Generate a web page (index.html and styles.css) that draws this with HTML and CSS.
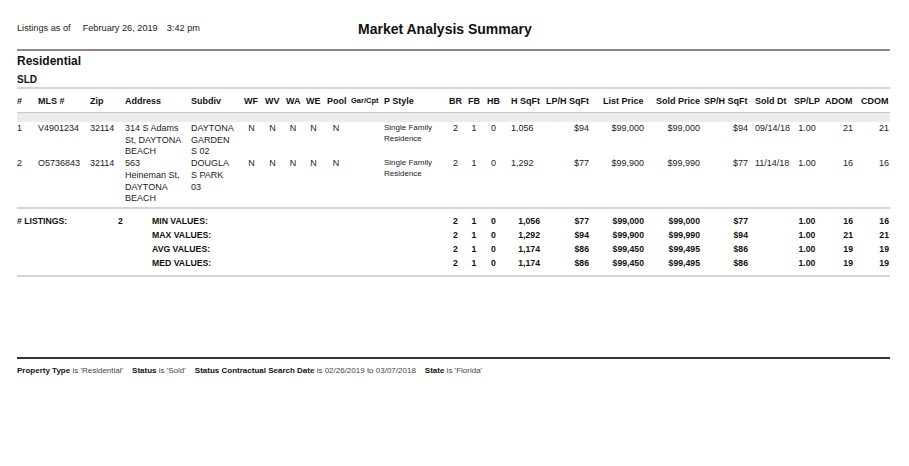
FILE: index.html
```html
<!DOCTYPE html>
<html lang="en">
<head>
<meta charset="utf-8">
<title>Market Analysis Summary</title>
<link rel="stylesheet" href="styles.css">
</head>
<body>
<div class="page">
  <header class="top">
    <div class="asof"><span>Listings as of</span><span class="date">February 26, 2019</span><span class="time">3:42 pm</span></div>
    <h1 class="title">Market Analysis Summary</h1>
  </header>
  <div class="rule"></div>
  <h2 class="section">Residential</h2>
  <h3 class="status">SLD</h3>
  <table class="grid">
    <colgroup>
      <col class="w21"><col class="w52"><col class="w35"><col class="w66"><col class="w53">
      <col class="w21"><col class="w21"><col class="w20"><col class="w21"><col class="w24">
      <col class="w33"><col class="w65"><col class="w19"><col class="w19"><col class="w24">
      <col class="w35"><col class="w57"><col class="w53"><col class="w48"><col class="w51">
      <col class="w39"><col class="w31"><col class="w36"><col class="w29">
    </colgroup>
    <thead>
      <tr class="head">
        <th>#</th><th>MLS #</th><th>Zip</th><th>Address</th><th>Subdiv</th>
        <th>WF</th><th>WV</th><th>WA</th><th>WE</th><th>Pool</th>
        <th class="small">Gar/Cpt</th><th>P Style</th><th>BR</th><th>FB</th><th>HB</th>
        <th>H SqFt</th><th>LP/H SqFt</th><th>List Price</th><th>Sold Price</th><th>SP/H SqFt</th>
        <th>Sold Dt</th><th>SP/LP</th><th>ADOM</th><th>CDOM</th>
      </tr>
    </thead>
    <tbody class="data">
      <tr><td class="band" colspan="24"></td></tr>
      <tr class="first">
        <td>1</td><td>V4901234</td><td>32114</td><td>314 S Adams<br>St, DAYTONA<br>BEACH</td><td>DAYTONA<br>GARDEN<br>S 02</td>
        <td class="yn">N</td><td class="yn">N</td><td class="yn">N</td><td class="yn">N</td><td class="yn">N</td>
        <td></td><td class="style">Single Family<br>Residence</td>
        <td class="c-br">2</td><td class="c-fb">1</td><td class="c-hb">0</td>
        <td>1,056</td><td class="c-lph">$94</td><td class="c-list">$99,000</td><td class="c-sold">$99,000</td><td class="c-sph">$94</td>
        <td class="c-dt">09/14/18</td><td class="c-splp">1.00</td><td class="c-adom">21</td><td class="c-cdom">21</td>
      </tr>
      <tr class="last">
        <td>2</td><td>O5736843</td><td>32114</td><td>563<br>Heineman St,<br>DAYTONA<br>BEACH</td><td>DOUGLA<br>S PARK<br>03</td>
        <td class="yn">N</td><td class="yn">N</td><td class="yn">N</td><td class="yn">N</td><td class="yn">N</td>
        <td></td><td class="style">Single Family<br>Residence</td>
        <td class="c-br">2</td><td class="c-fb">1</td><td class="c-hb">0</td>
        <td>1,292</td><td class="c-lph">$77</td><td class="c-list">$99,900</td><td class="c-sold">$99,990</td><td class="c-sph">$77</td>
        <td class="c-dt">11/14/18</td><td class="c-splp">1.00</td><td class="c-adom">16</td><td class="c-cdom">16</td>
      </tr>
    </tbody>
    <tbody class="summary">
      <tr class="first">
        <td colspan="12"><div class="labgrid"><span># LISTINGS:</span><span>2</span><span>MIN VALUES:</span></div></td>
        <td class="c-br">2</td><td class="c-fb">1</td><td class="c-hb">0</td>
        <td class="c-hsq">1,056</td><td class="c-lph">$77</td><td class="c-list">$99,000</td><td class="c-sold">$99,000</td><td class="c-sph">$77</td>
        <td></td><td class="c-splp">1.00</td><td class="c-adom">16</td><td class="c-cdom">16</td>
      </tr>
      <tr>
        <td colspan="12"><div class="labgrid"><span></span><span></span><span>MAX VALUES:</span></div></td>
        <td class="c-br">2</td><td class="c-fb">1</td><td class="c-hb">0</td>
        <td class="c-hsq">1,292</td><td class="c-lph">$94</td><td class="c-list">$99,900</td><td class="c-sold">$99,990</td><td class="c-sph">$94</td>
        <td></td><td class="c-splp">1.00</td><td class="c-adom">21</td><td class="c-cdom">21</td>
      </tr>
      <tr>
        <td colspan="12"><div class="labgrid"><span></span><span></span><span>AVG VALUES:</span></div></td>
        <td class="c-br">2</td><td class="c-fb">1</td><td class="c-hb">0</td>
        <td class="c-hsq">1,174</td><td class="c-lph">$86</td><td class="c-list">$99,450</td><td class="c-sold">$99,495</td><td class="c-sph">$86</td>
        <td></td><td class="c-splp">1.00</td><td class="c-adom">19</td><td class="c-cdom">19</td>
      </tr>
      <tr class="last">
        <td colspan="12"><div class="labgrid"><span></span><span></span><span>MED VALUES:</span></div></td>
        <td class="c-br">2</td><td class="c-fb">1</td><td class="c-hb">0</td>
        <td class="c-hsq">1,174</td><td class="c-lph">$86</td><td class="c-list">$99,450</td><td class="c-sold">$99,495</td><td class="c-sph">$86</td>
        <td></td><td class="c-splp">1.00</td><td class="c-adom">19</td><td class="c-cdom">19</td>
      </tr>
    </tbody>
  </table>
  <div class="foot-rule"></div>
  <p class="criteria"><span class="crit"><b>Property Type</b> is 'Residential'</span><span class="crit"><b>Status</b> is 'Sold'</span><span class="crit"><b>Status Contractual Search Date</b> is 02/26/2019 to 03/07/2018</span><span class="crit"><b>State</b> is 'Florida'</span></p>
</div>
</body>
</html>
```

FILE: styles.css
```css
html, body {
  margin: 0;
  background: #ffffff;
}
body {
  color: #222222;
  font-family: "Liberation Sans", Arial, Helvetica, sans-serif;
}
.page {
  width: 873px;
  padding-left: 17px;
}
.top {
  display: grid;
  grid-template-columns: 341px auto;
  align-items: start;
  padding-top: 20px;
}
.asof {
  display: flex;
  font-size: 9.2px;
  line-height: 16px;
  color: #222;
}
.asof .date { margin-left: 12px; }
.asof .time { margin-left: 9px; }
.title {
  margin: 0;
  font-size: 14px;
  font-weight: bold;
  line-height: 18px;
  color: #111;
}
.rule {
  margin-top: 11px;
  border-top: 2px solid #8a8a8a;
}
.section {
  margin: 3px 0 0;
  font-size: 12px;
  line-height: 14px;
  font-weight: bold;
  color: #111;
}
.status {
  margin: 6px 0 0;
  font-size: 10px;
  line-height: 12px;
  font-weight: bold;
  color: #111;
}
.grid {
  margin-top: 1px;
  width: 873px;
  table-layout: fixed;
  border-collapse: separate;
  border-spacing: 0;
  font-size: 9px;
}
.w19 { width: 19px; } .w20 { width: 20px; } .w21 { width: 21px; } .w24 { width: 24px; }
.w29 { width: 29px; } .w31 { width: 31px; } .w33 { width: 33px; } .w35 { width: 35px; }
.w36 { width: 36px; } .w39 { width: 39px; } .w48 { width: 48px; } .w51 { width: 51px; }
.w52 { width: 52px; } .w53 { width: 53px; } .w57 { width: 57px; } .w65 { width: 65px; }
.w66 { width: 66px; }
.grid th {
  text-align: left;
  font-weight: bold;
  font-size: 9px;
  line-height: 12px;
  padding: 6px 0 5px;
  white-space: nowrap;
  color: #111;
  border-top: 2px solid #d4d4d4;
  border-bottom: 1px solid #c8c8c8;
  vertical-align: middle;
}
.grid th.small { font-size: 7.5px; }
.grid td {
  padding: 0;
  white-space: nowrap;
  vertical-align: top;
  text-align: left;
}
.grid td.band {
  height: 9px;
  background: #ececec;
  font-size: 0;
  line-height: 0;
}
.data td {
  line-height: 11.7px;
  color: #222;
}
.data tr.first td { padding-top: 1px; }
.data tr.last td { padding-top: 0; padding-bottom: 2px; }
.data td.style {
  font-size: 8px;
  line-height: 10.5px;
}
.yn { text-align: center !important; padding-right: 6px !important; }
.c-br { text-align: center !important; padding-right: 6px !important; }
.c-fb { text-align: center !important; padding-right: 7px !important; }
.c-hb { text-align: center !important; padding-right: 11px !important; }
.c-hsq { text-align: right !important; padding-right: 6px !important; }
.c-lph { text-align: right !important; padding-right: 14px !important; }
.c-list { text-align: right !important; padding-right: 12px !important; }
.c-sold { text-align: right !important; padding-right: 4px !important; }
.c-sph { text-align: right !important; padding-right: 7px !important; }
.c-dt { text-align: right !important; padding-right: 6px !important; }
.c-splp { text-align: center !important; padding-right: 5px !important; }
.c-adom { text-align: right !important; padding-right: 8px !important; }
.c-cdom { text-align: right !important; padding-right: 1px !important; }
.summary td {
  font-weight: bold;
  font-size: 8.7px;
  line-height: 14px;
  color: #111;
}
.summary tr.first td {
  border-top: 2px solid #d4d4d4;
  padding-top: 5px;
}
.summary tr.last td {
  border-bottom: 2px solid #d4d4d4;
  padding-bottom: 5px;
}
.labgrid {
  display: grid;
  grid-template-columns: 101px 34px auto;
}
.foot-rule {
  margin-top: 80px;
  border-top: 2px solid #333;
}
.criteria {
  margin: 7px 0 0;
  font-size: 8px;
  line-height: 10px;
  color: #444;
  white-space: nowrap;
}
.criteria b {
  color: #111;
}
.crit {
  margin-right: 9px;
}
```
